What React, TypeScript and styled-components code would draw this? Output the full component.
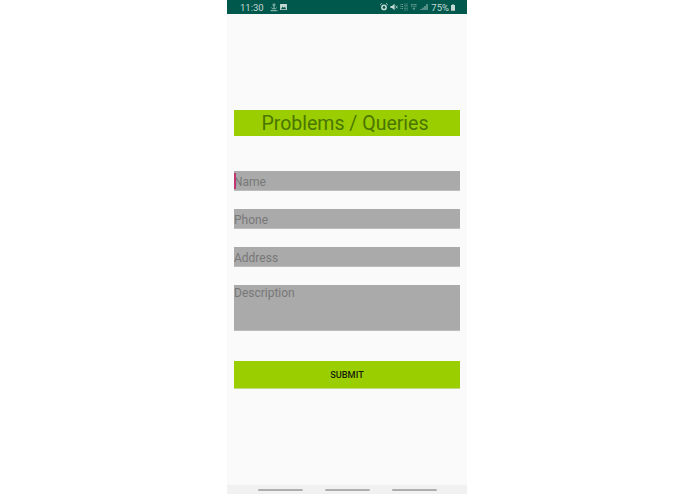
import React from 'react';
import styled, { createGlobalStyle } from 'styled-components';

const GlobalStyle = createGlobalStyle`
  html, body {
    margin: 0;
    padding: 0;
    background: #ffffff;
  }
  * {
    box-sizing: border-box;
  }
`;

const fields = [
  { id: 1, label: 'Name', focused: true },
  { id: 2, label: 'Phone', focused: false },
  { id: 3, label: 'Address', focused: false }
];

const App = () => {
  return (
    <Page>
      <GlobalStyle />
      <Phone>
        <StatusBar>
          <StatusGroup>
            <Clock>11:30</Clock>
            <svg width="8" height="9" viewBox="0 0 9 9">
              <circle cx="4.5" cy="1.6" r="1.2" fill="none" stroke="#b9d3cd" strokeWidth="0.9" />
              <path d="M4.5 3v2.6M1.6 4.6c.4 1 1.4 1.4 2.9 1.4s2.5-.4 2.9-1.4" fill="none" stroke="#b9d3cd" strokeWidth="0.9" />
              <path d="M.8 8h7.4" stroke="#b9d3cd" strokeWidth="1.2" strokeDasharray="1.2 .5" />
            </svg>
            <svg width="7" height="6" viewBox="0 0 8 7">
              <rect width="8" height="7" fill="#c4d9d4" />
              <path d="M1 6l2-3 1.5 1.6L5.6 3 7 6z" fill="#00584d" />
            </svg>
          </StatusGroup>
          <StatusGroup>
            <svg width="8" height="8" viewBox="0 0 8 8">
              <circle cx="4" cy="4.4" r="2.9" fill="#c4d9d4" />
              <circle cx="4" cy="4.4" r="1.3" fill="#00584d" />
              <path d="M.3 1.8L1.8.4M7.7 1.8L6.2.4" stroke="#c4d9d4" strokeWidth="1" />
            </svg>
            <svg width="8" height="8" viewBox="0 0 8 8">
              <path d="M.5 3h1.5L4.6.8v6.4L2 5H.5z" fill="#c4d9d4" />
              <path d="M5.6 2.6l2 2.8M7.6 2.6l-2 2.8" stroke="#c4d9d4" strokeWidth="0.7" />
            </svg>
            <svg width="8" height="8" viewBox="0 0 8 8">
              <path d="M.5 1.5h3M.5 3.5h3M.5 5.5h3M5 .5v7M7 .5v7" stroke="#7fa9a0" strokeWidth="0.9" strokeDasharray="1 .5" />
            </svg>
            <svg width="8" height="8" viewBox="0 0 8 8">
              <path d="M1 1.5h6M1 3.2h6M4 4.4v3M2.6 5.6h2.8" stroke="#7fa9a0" strokeWidth="0.9" strokeDasharray="1 .4" />
            </svg>
            <svg width="8" height="8" viewBox="0 0 8 8">
              <path d="M1 7V6M3 7V4.6M5 7V3M7 7V1" stroke="#b9d3cd" strokeWidth="0.9" />
            </svg>
            <Percent>75%</Percent>
            <svg width="4" height="7" viewBox="0 0 5 8">
              <path d="M1.6 0h1.8v1H5v7H0V1h1.6z" fill="#c4d9d4" />
            </svg>
          </StatusGroup>
        </StatusBar>
        <Content>
          <Title>Problems / Queries</Title>
          <Form>
            {fields.map((field) => (
              <FieldBox key={field.id}>
                {field.focused && <Caret />}
                <Input placeholder={field.label} />
              </FieldBox>
            ))}
            <Description placeholder="Description" />
          </Form>
          <SubmitBtn type="button">SUBMIT</SubmitBtn>
        </Content>
        <NavBar>
          <NavLine />
          <NavLine />
          <NavLine />
        </NavBar>
      </Phone>
    </Page>
  );
};

export default App;

const Page = styled.div`
  display: flex;
  height: 494px;
  padding-left: 227px;
  overflow: hidden;
`;
const Phone = styled.div`
  display: flex;
  flex-direction: column;
  width: 240px;
  height: 494px;
  background-color: #fafafa;
  font-family: Roboto, 'Liberation Sans', sans-serif;
`;
const StatusBar = styled.div`
  display: flex;
  justify-content: space-between;
  align-items: center;
  flex: 0 0 14px;
  padding: 0 12px 0 13px;
  background-color: #00584d;
  color: #c4d9d4;
`;
const StatusGroup = styled.div`
  display: flex;
  align-items: center;
  gap: 2px;
`;
const Clock = styled.span`
  font-size: 9.5px;
  margin-right: 4px;
`;
const Percent = styled.span`
  font-size: 9.5px;
  margin-left: 1px;
`;
/* 본문 */
const Content = styled.div`
  display: flex;
  flex-direction: column;
  flex: 1;
  padding: 96px 7px 0;
`;
const Title = styled.div`
  display: flex;
  justify-content: center;
  align-items: center;
  height: 26px;
  padding: 1px 4px 0 0;
  background-color: #9ace00;
  color: #4a7600;
  font-size: 19.5px;
`;
const Form = styled.div`
  display: flex;
  flex-direction: column;
  gap: 18px;
  margin-top: 35px;
`;
const FieldBox = styled.div`
  position: relative;
  height: 20px;
`;
const Caret = styled.div`
  position: absolute;
  left: 0;
  top: 2px;
  width: 2px;
  height: 16px;
  background-color: #c2376f;
`;
const Input = styled.input`
  display: block;
  width: 100%;
  height: 100%;
  padding: 2px 0 0;
  border: none;
  border-bottom: 1px solid #bdbdbd;
  outline: none;
  background-color: #aaaaaa;
  font-family: inherit;
  font-size: 12px;
  &::placeholder {
    color: #787878;
    opacity: 1;
  }
`;
const Description = styled.textarea`
  display: block;
  width: 100%;
  height: 46px;
  padding: 1px 0 0;
  border: none;
  border-bottom: 1px solid #bdbdbd;
  outline: none;
  resize: none;
  background-color: #aaaaaa;
  font-family: inherit;
  font-size: 12px;
  line-height: 14px;
  &::placeholder {
    color: #787878;
    opacity: 1;
  }
`;
const SubmitBtn = styled.button`
  display: flex;
  justify-content: center;
  align-items: center;
  height: 28px;
  margin-top: 30px;
  padding: 0;
  border: none;
  border-bottom: 1px solid #c3d98a;
  background-color: #9ace00;
  color: #16210a;
  font-family: inherit;
  font-size: 9.2px;
  font-weight: 500;
`;
/* 하단 */
const NavBar = styled.div`
  display: flex;
  justify-content: center;
  align-items: center;
  gap: 22px;
  flex: 0 0 9px;
  background-color: #f1f1f1;
`;
const NavLine = styled.div`
  width: 45px;
  height: 2px;
  border-radius: 1px;
  background-color: #aeaeae;
`;
